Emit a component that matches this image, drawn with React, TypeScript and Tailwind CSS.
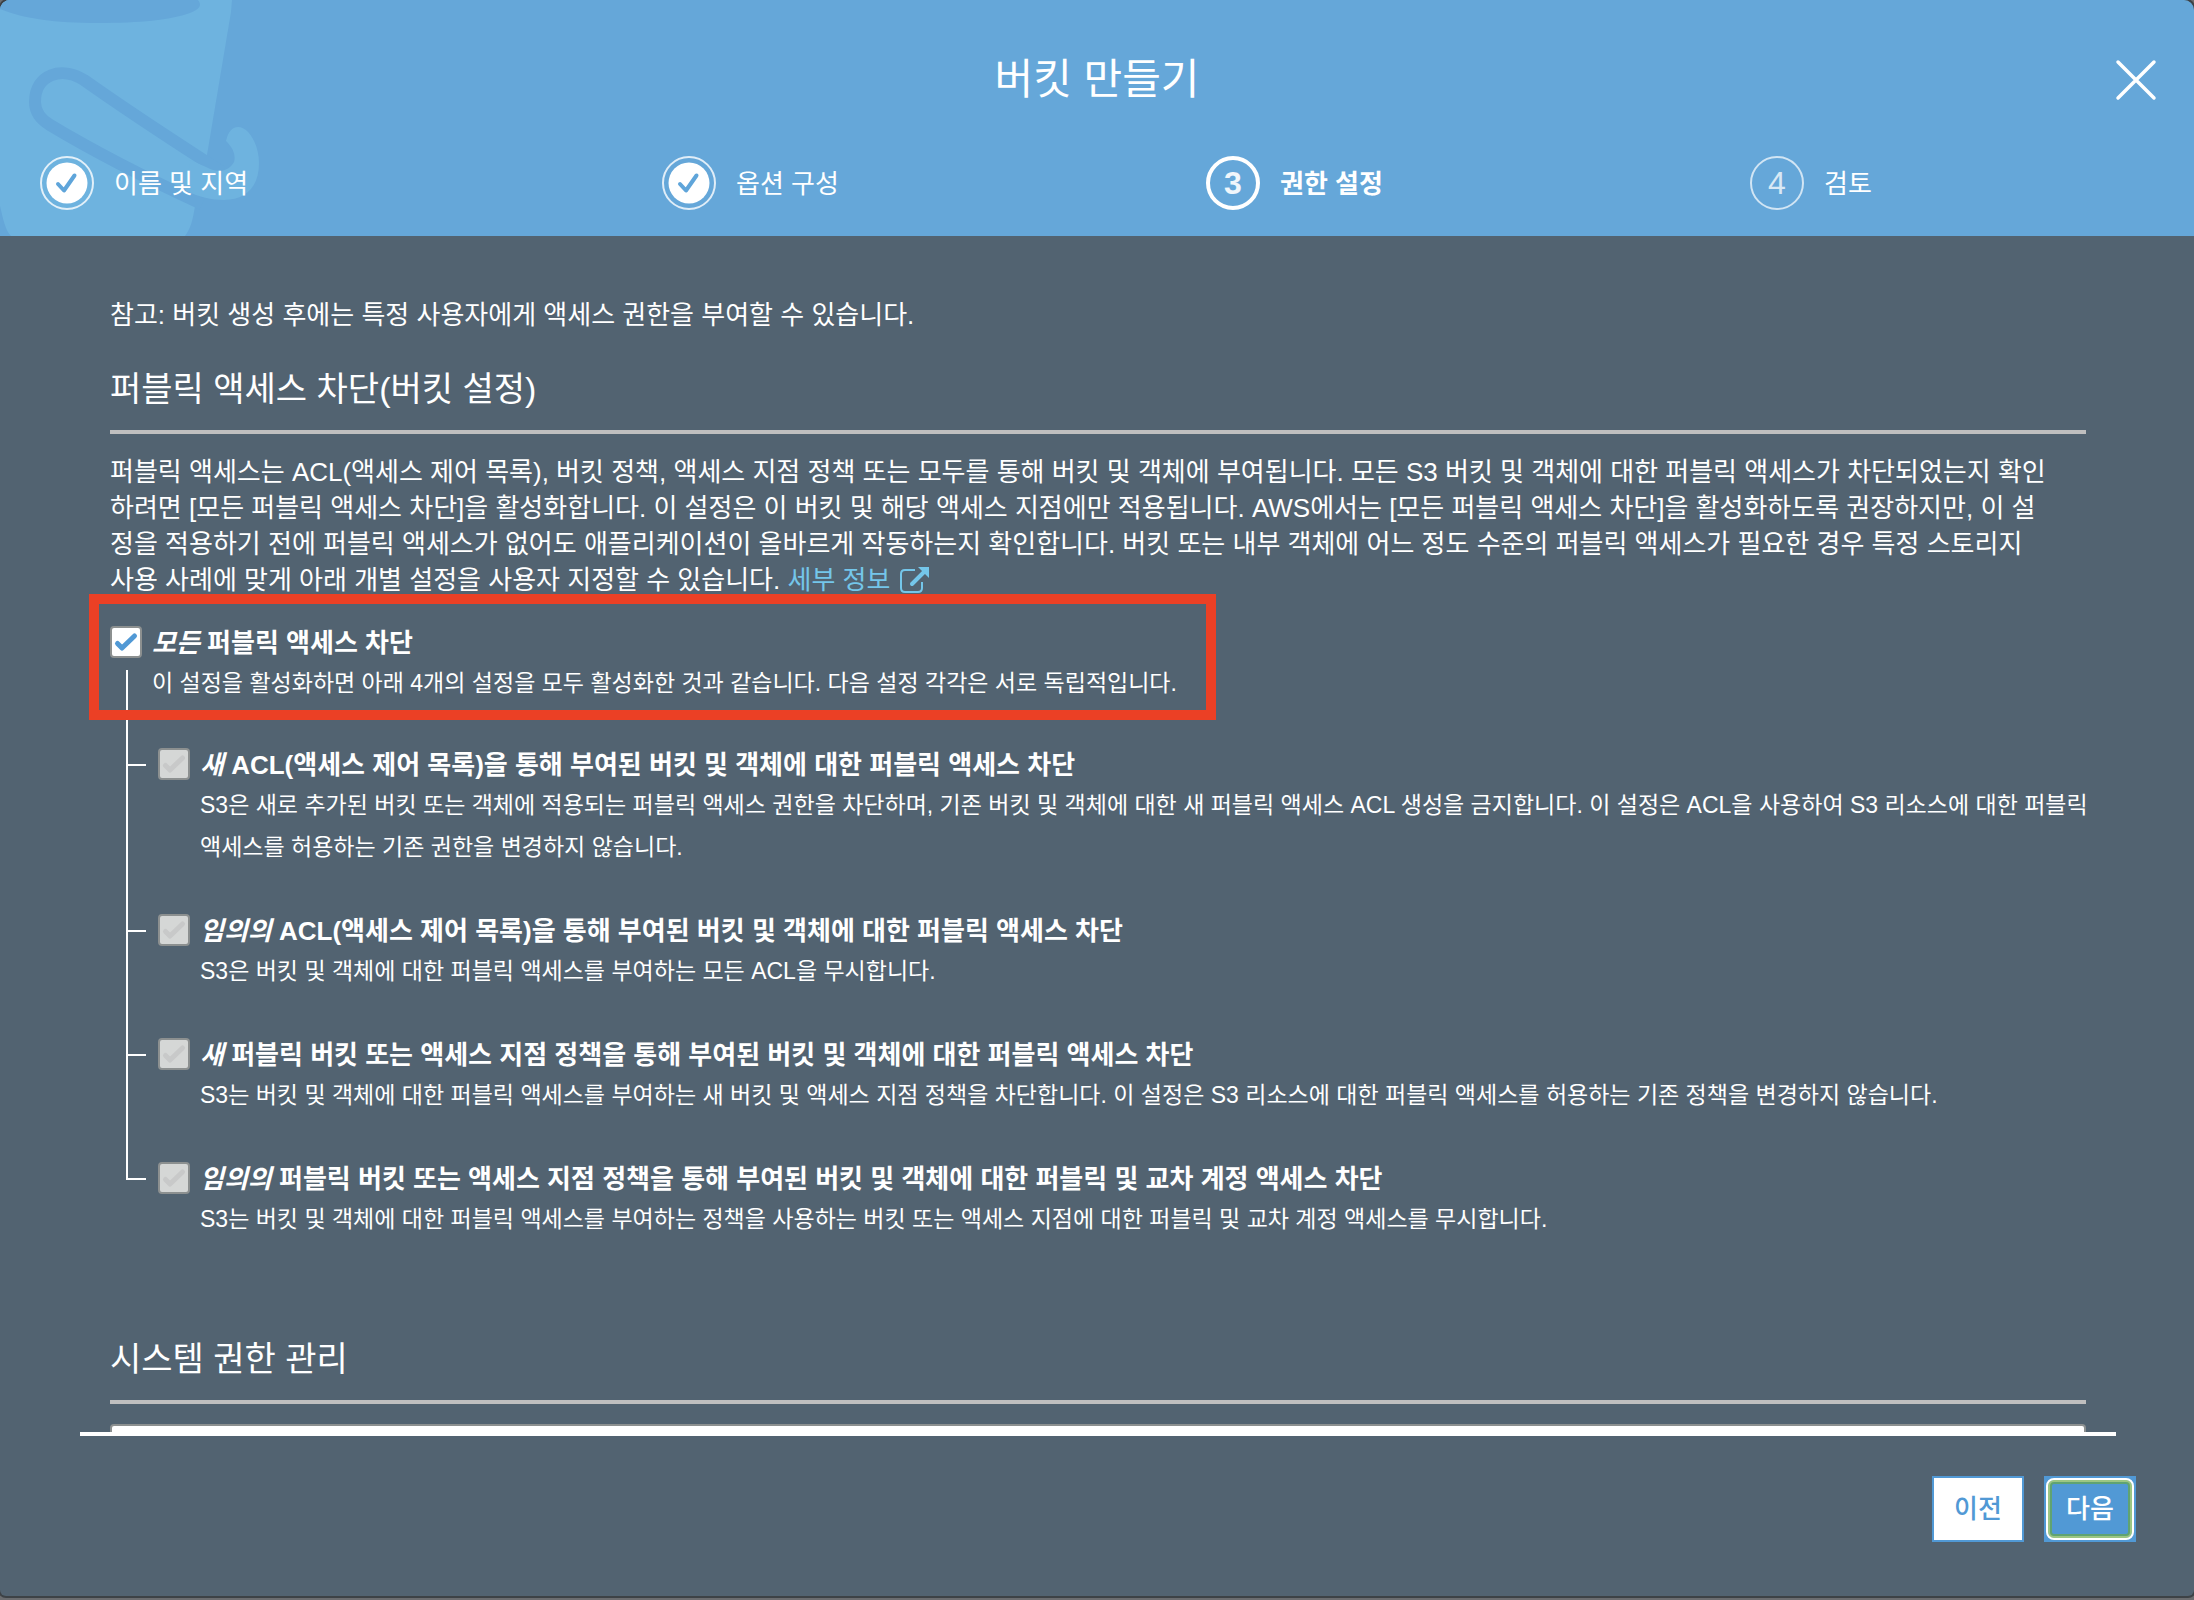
import { ReactNode } from "react";

type Step = {
    label: string;
    state: "done" | "current" | "todo";
};

type Setting = {
    id: string;
    emphasis: string;
    title: string;
    description: ReactNode;
};

const steps: Step[] = [
    { label: "이름 및 지역", state: "done" },
    { label: "옵션 구성", state: "done" },
    { label: "권한 설정", state: "current" },
    { label: "검토", state: "todo" }
];

const settings: Setting[] = [
    {
        id: "new-acl",
        emphasis: "새",
        title: "ACL(액세스 제어 목록)을 통해 부여된 버킷 및 객체에 대한 퍼블릭 액세스 차단",
        description: (
            <>
                S3은 새로 추가된 버킷 또는 객체에 적용되는 퍼블릭 액세스 권한을 차단하며, 기존 버킷 및 객체에 대한 새 퍼블릭 액세스 ACL 생성을 금지합니다. 이 설정은 ACL을 사용하여 S3 리소스에 대한 퍼블릭<br />
                액세스를 허용하는 기존 권한을 변경하지 않습니다.
            </>
        )
    },
    {
        id: "any-acl",
        emphasis: "임의의",
        title: "ACL(액세스 제어 목록)을 통해 부여된 버킷 및 객체에 대한 퍼블릭 액세스 차단",
        description: "S3은 버킷 및 객체에 대한 퍼블릭 액세스를 부여하는 모든 ACL을 무시합니다."
    },
    {
        id: "new-policy",
        emphasis: "새",
        title: "퍼블릭 버킷 또는 액세스 지점 정책을 통해 부여된 버킷 및 객체에 대한 퍼블릭 액세스 차단",
        description: "S3는 버킷 및 객체에 대한 퍼블릭 액세스를 부여하는 새 버킷 및 액세스 지점 정책을 차단합니다. 이 설정은 S3 리소스에 대한 퍼블릭 액세스를 허용하는 기존 정책을 변경하지 않습니다."
    },
    {
        id: "any-policy",
        emphasis: "임의의",
        title: "퍼블릭 버킷 또는 액세스 지점 정책을 통해 부여된 버킷 및 객체에 대한 퍼블릭 및 교차 계정 액세스 차단",
        description: "S3는 버킷 및 객체에 대한 퍼블릭 액세스를 부여하는 정책을 사용하는 버킷 또는 액세스 지점에 대한 퍼블릭 및 교차 계정 액세스를 무시합니다."
    }
];

function Bucket() {
    return (
        <svg className="absolute left-0 top-0" width="262" height="236" viewBox="0 0 262 236" fill="none">
            <path d="M0 0H232L231 12L207 155L195 206C193 219 191 228 185 236H11C5 230 3 218 0 206Z" fill="#6eb3df" />
            <path d="M0 0H198C202 5 200 9 190 13C170 20 140 23 98 23C55 23 25 19 0 9Z" fill="#65a7d9" />
            <path d="M222 172L205 161C160 132 125 109 84 80C62 66 35 74 35 102C35 112 40 119 50 125C100 155 150 180 202 204" stroke="#65a7d9" strokeWidth="12" />
            <path d="M190 160L206 167C219 174 229 171 234 162C236 155 233 148 226 141C228 132 232 127 238 127C249 127 259 145 259 163C259 188 245 200 224 200C211 200 200 197 186 191Z" fill="#6eb3df" />
        </svg>
    );
}

function StepIcon({ step, number }: { step: Step; number: number }) {
    if (step.state === "done") {
        return (
            <svg width="54" height="54" viewBox="0 0 54 54" fill="none">
                <circle cx="27" cy="27" r="26" stroke="#fff" strokeOpacity="0.8" strokeWidth="2" />
                <circle cx="27" cy="27" r="20.5" fill="#fff" />
                <path d="M18 28L24 34.500L34.500 19.500" stroke="#5fa5da" strokeWidth="4" strokeLinecap="round" strokeLinejoin="round" />
            </svg>
        );
    }
    return (
        <span
            className={
                step.state === "current"
                    ? "flex size-[54px] items-center justify-center rounded-full border-4 border-white text-[32px] font-bold text-white/90"
                    : "flex size-[54px] items-center justify-center rounded-full border-2 border-white/70 text-[32px] text-white/75"
            }
        >
            {number}
        </span>
    );
}

function Checkbox({ id, disabled }: { id: string; disabled?: boolean }) {
    return (
        <span className="relative block size-8 shrink-0">
            <input
                id={id}
                type="checkbox"
                defaultChecked
                disabled={disabled}
                className="block size-8 appearance-none rounded-[4px] border-2 border-[#8c9090] bg-white disabled:bg-[#d5d7d6]"
            />
            <svg
                className={disabled ? "pointer-events-none absolute inset-0 text-[#c8c9c9]" : "pointer-events-none absolute inset-0 text-[#5199d5]"}
                width="32"
                height="32"
                viewBox="0 0 32 32"
                fill="none"
                stroke="currentColor"
            >
                <path d="M7.500 17.500L12 22L24.500 10" strokeWidth="5" strokeLinecap="round" strokeLinejoin="round" />
            </svg>
        </span>
    );
}

function SectionHeading({ children }: { children: ReactNode }) {
    return (
        <h2 className="border-b-4 border-[#bfbfbf] pb-4 text-[34px] leading-[50px]">
            {children}
        </h2>
    );
}

function SettingRow({ setting, last }: { setting: Setting; last: boolean }) {
    return (
        <li className="flex">
            {/* tree line down the left, with a branch to the tick box */}
            <div className="flex w-8 shrink-0 flex-col">
                <div className="h-[46px] w-5 border-b-2 border-l-2 border-white" />
                {!last && <div className="grow border-l-2 border-white" />}
            </div>
            <div className="flex grow gap-[10px] pt-7">
                <Checkbox id={setting.id} disabled />
                <div className="pb-[18px] whitespace-nowrap">
                    <label htmlFor={setting.id} className="block text-[26px] leading-[34px] font-bold">
                        <em>{setting.emphasis}</em> {setting.title}
                    </label>
                    <p className="pt-[2px] text-[23px] leading-[42px]">{setting.description}</p>
                </div>
            </div>
        </li>
    );
}

function App() {
    return (
        <div className="flex h-screen flex-col bg-[#6b6d70] pb-1 font-['Liberation_Sans','Noto_Sans_CJK_KR',sans-serif] text-white">
            <div className="flex min-h-0 grow flex-col rounded-t-[10px] rounded-b-md bg-[#526371] shadow-[0_0_0_2px_#3d4246]">
                <header className="relative h-[236px] shrink-0 overflow-hidden rounded-t-[10px] bg-[#65a7d9]">
                    <Bucket />
                    <div className="relative flex h-[156px] items-center justify-center">
                        <h1 className="pt-1 text-[42px] leading-[60px]">버킷 만들기</h1>
                        <button type="button" aria-label="닫기" className="absolute right-[37px] top-[59px]">
                            <svg width="42" height="42" viewBox="0 0 42 42" stroke="#fff" strokeWidth="3.500" strokeLinecap="round">
                                <path d="M3 3L39 39M39 3L3 39" />
                            </svg>
                        </button>
                    </div>
                    <ol className="relative grid grid-cols-[622fr_544fr_544fr_444fr] pl-10">
                        {steps.map((step, index) => (
                            <li key={step.label} className="flex items-center gap-5">
                                <StepIcon step={step} number={index + 1} />
                                <span className={step.state === "current" ? "pt-[2px] text-[26px] font-bold" : "pt-[2px] text-[26px]"}>
                                    {step.label}
                                </span>
                            </li>
                        ))}
                    </ol>
                </header>

                <main className="mr-[78px] ml-20 min-h-0 grow overflow-hidden border-b-4 border-white px-[30px] pt-[61px]">
                    <p className="pb-[31px] text-[26px] leading-9">
                        참고: 버킷 생성 후에는 특정 사용자에게 액세스 권한을 부여할 수 있습니다.
                    </p>
                    <SectionHeading>퍼블릭 액세스 차단(버킷 설정)</SectionHeading>
                    <p className="pt-5 text-[26px] leading-9">
                        퍼블릭 액세스는 ACL(액세스 제어 목록), 버킷 정책, 액세스 지점 정책 또는 모두를 통해 버킷 및 객체에 부여됩니다. 모든 S3 버킷 및 객체에 대한 퍼블릭 액세스가 차단되었는지 확인<br />
                        하려면 [모든 퍼블릭 액세스 차단]을 활성화합니다. 이 설정은 이 버킷 및 해당 액세스 지점에만 적용됩니다. AWS에서는 [모든 퍼블릭 액세스 차단]을 활성화하도록 권장하지만, 이 설<br />
                        정을 적용하기 전에 퍼블릭 액세스가 없어도 애플리케이션이 올바르게 작동하는지 확인합니다. 버킷 또는 내부 객체에 어느 정도 수준의 퍼블릭 액세스가 필요한 경우 특정 스토리지<br />
                        사용 사례에 맞게 아래 개별 설정을 사용자 지정할 수 있습니다.{" "}
                        <a href="#details" className="text-[#74c6ea]">
                            세부 정보{" "}
                            <svg className="inline-block align-[-5px]" width="32" height="28" viewBox="0 0 32 28" fill="none" stroke="currentColor">
                                <path d="M17 4H7Q3 4 3 8V22Q3 26 7 26H20Q24 26 24 22V16" strokeWidth="2" />
                                <path d="M14 18L26 6" strokeWidth="4" strokeLinecap="round" />
                                <path d="M20 1H31V12Z" fill="currentColor" stroke="none" />
                            </svg>
                        </a>
                    </p>

                    <div className="relative pt-7">
                        <div className="flex gap-[10px]">
                            <Checkbox id="block-all" />
                            <div>
                                <label htmlFor="block-all" className="block text-[26px] leading-[34px] font-bold">
                                    <em>모든</em> 퍼블릭 액세스 차단
                                </label>
                                <p className="pt-[2px] text-[23px] leading-[42px]">
                                    이 설정을 활성화하면 아래 4개의 설정을 모두 활성화한 것과 같습니다. 다음 설정 각각은 서로 독립적입니다.
                                </p>
                            </div>
                        </div>
                        <div className="absolute left-4 top-[72px] h-[50px] border-l-2 border-white" />
                        <div className="pointer-events-none absolute -left-[21px] -top-1 h-[126px] w-[1127px] border-10 border-[#eb4025]" />
                    </div>
                    <ul className="pt-4 pl-4">
                        {settings.map((setting, index) => (
                            <SettingRow key={setting.id} setting={setting} last={index === settings.length - 1} />
                        ))}
                    </ul>

                    <div className="pt-[76px]">
                        <SectionHeading>시스템 권한 관리</SectionHeading>
                    </div>
                    <select aria-label="시스템 권한 관리" className="mt-5 h-16 w-full appearance-none rounded-[4px] border-2 border-[#8c9090] bg-white" />
                </main>

                <footer className="flex shrink-0 justify-end gap-5 px-[58px] pt-10 pb-[54px] text-[26px] font-medium">
                    <button type="button" className="h-[66px] w-[92px] border-2 border-[#5199d5] bg-white text-[#5199d5]">
                        이전
                    </button>
                    <button type="button" className="h-[66px] w-[92px] bg-[#5199d5] p-[2px]">
                        <span className="flex size-full items-center justify-center rounded-lg border-2 border-white shadow-[inset_0_0_0_2px_#9cc684,inset_0_0_0_4px_#60a372]">
                            다음
                        </span>
                    </button>
                </footer>
            </div>
        </div>
    );
}

export default App;
